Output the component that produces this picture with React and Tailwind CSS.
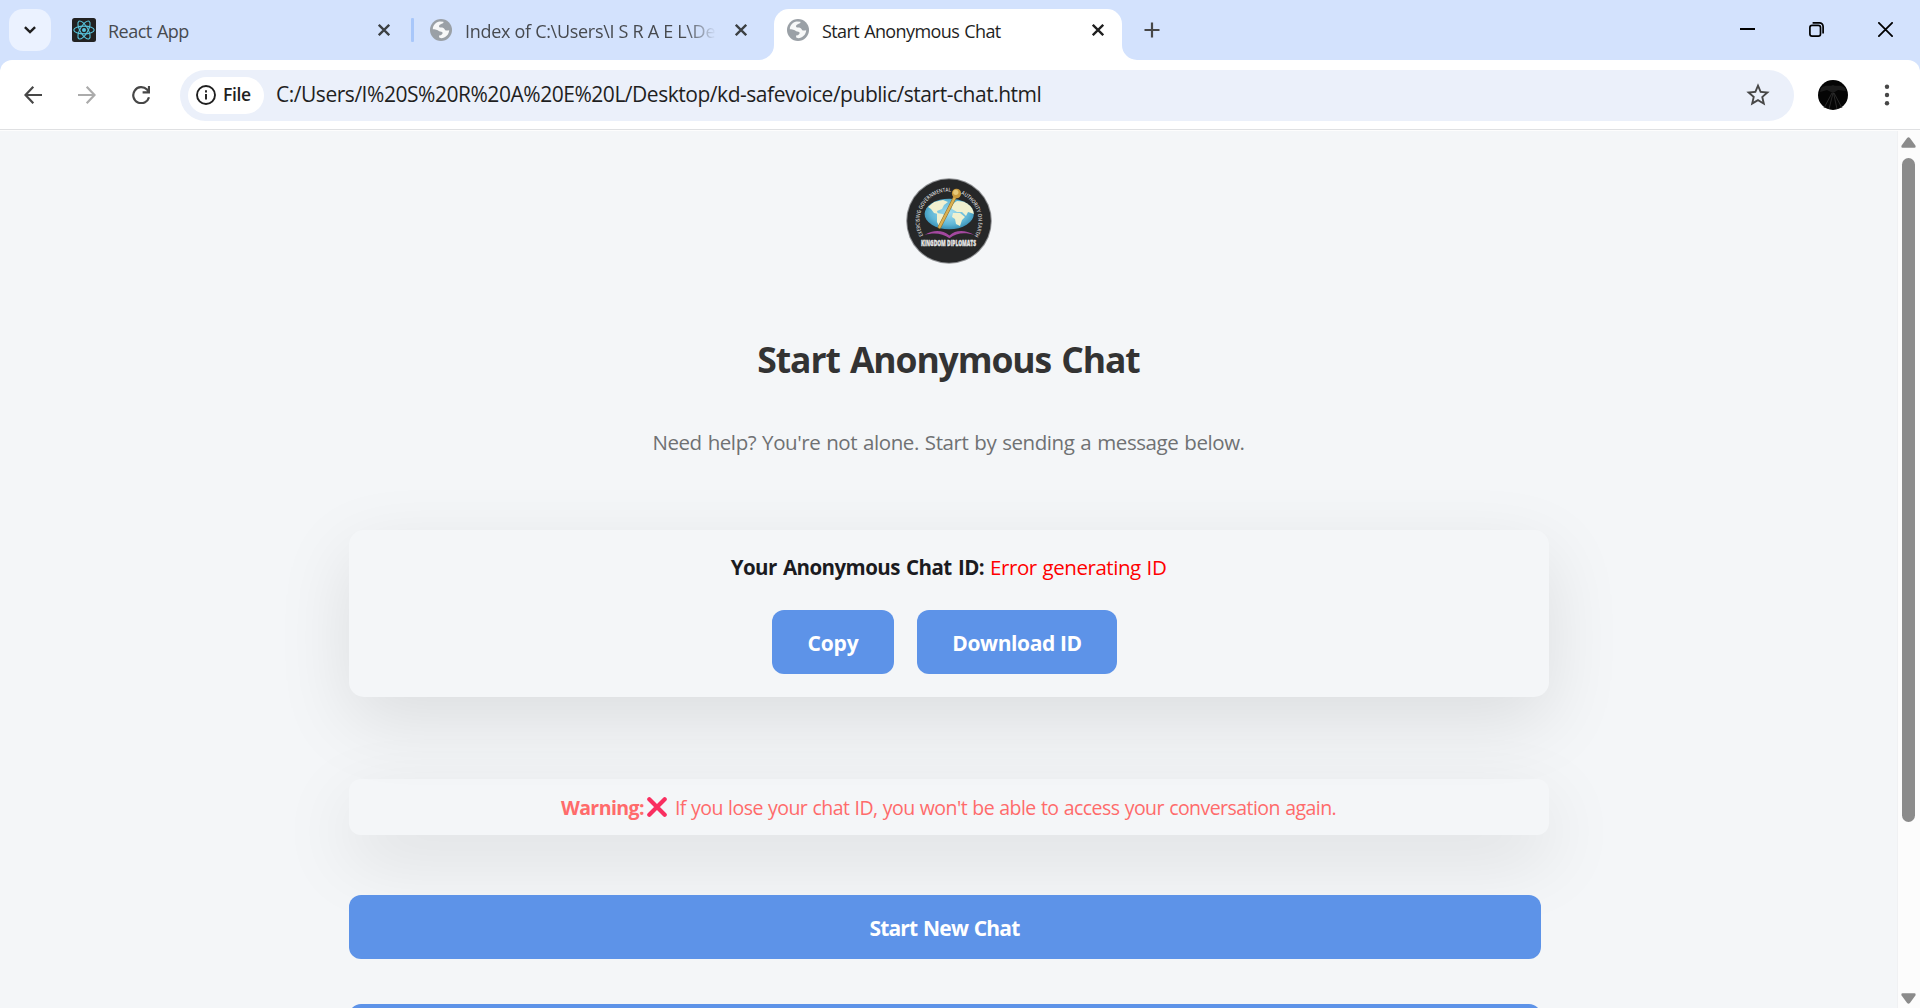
import React from "react";

function Globe() {
  return (
    <svg viewBox="0 0 22 22" className="size-[22px] shrink-0">
      <circle cx="11" cy="11" r="11" fill="#9aa0a6" />
      <path
        fill="#fff"
        fillOpacity="0.92"
        d="M2.8 10.2C3 6 6 3 9.8 2.6L13.4 2.8C14 4.8 11.2 4.6 9.6 6C8.6 7 8.8 8.4 10.4 8.5C12.6 8.4 14 8.8 14.6 10.2C15.2 11.6 16 12 19.2 11.2C19 15.6 15.4 19 11.2 19.2L9.2 18.6L9 16.4C11 16.6 12.8 15.4 12.6 13.8C12.2 12.4 10.4 12.6 9.2 12.2C8 11.4 6.8 10.2 2.8 10.2Z"
      />
    </svg>
  );
}

function Cross({ color = "#3c4043" }) {
  return (
    <svg viewBox="0 0 12 12" className="size-3 shrink-0" stroke={color} strokeWidth="2.3">
      <path d="M0.8 0.8L11.2 11.2M11.2 0.8L0.8 11.2" />
    </svg>
  );
}

function ReactIcon() {
  return (
    <svg viewBox="0 0 24 24" className="size-6 shrink-0">
      <rect width="24" height="24" rx="2.5" fill="#222" />
      <g fill="none" stroke="#58c4dc" strokeWidth="1.1">
        <ellipse cx="12" cy="12" rx="10.2" ry="3.9" />
        <ellipse cx="12" cy="12" rx="10.2" ry="3.9" transform="rotate(60 12 12)" />
        <ellipse cx="12" cy="12" rx="10.2" ry="3.9" transform="rotate(120 12 12)" />
      </g>
      <circle cx="12" cy="12" r="2" fill="#58c4dc" />
    </svg>
  );
}

function Logo() {
  return (
    <svg viewBox="0 0 86 86" className="size-[86px] shrink-0">
      <defs>
        <path id="arcLeft" d="M17.3 57.4A29.5 29.5 0 0 1 46.5 13.7" />
        <path id="arcRight" d="M55 16.1A29.5 29.5 0 0 1 67.9 58.8" />
        <radialGradient id="sea" cx="50%" cy="45%" r="60%">
          <stop offset="0" stopColor="#a5dff0" />
          <stop offset="0.65" stopColor="#5fb6d6" />
          <stop offset="1" stopColor="#2e86ad" />
        </radialGradient>
        <clipPath id="globeClip">
          <ellipse cx="43.2" cy="36" rx="24.6" ry="15.3" />
        </clipPath>
      </defs>
      <circle cx="43" cy="43" r="42.8" fill="#8d8f92" />
      <circle cx="43" cy="43" r="41.8" fill="#262728" />
      <g fill="#d8d8d8" fontFamily="Open Sans, sans-serif" fontSize="5.4" fontWeight="600">
        <text textLength="63" lengthAdjust="spacingAndGlyphs">
          <textPath href="#arcLeft">EXERCISING GOVERNMENTAL</textPath>
        </text>
        <text textLength="49.500" lengthAdjust="spacingAndGlyphs">
          <textPath href="#arcRight">AUTHORITY ON EARTH</textPath>
        </text>
      </g>
      <ellipse cx="43.2" cy="36" rx="24.6" ry="15.3" fill="url(#sea)" />
      <g clipPath="url(#globeClip)" fill="#f0f0cf">
        <path d="M22 29l6-5 9-2 5 2-4 3-2 4-5 2 1 3-4-1-3-4z" />
        <path d="M31 35l6 1 3 4-3 5-3 5-3-6z" />
        <path d="M45 27l6-4 12 1 7 7-2 5-6-2-2 4-4-4-5 0-5-3z" />
        <path d="M47 35l7 0 5 4-3 3-2 6-4-2-1-5-3-2z" />
      </g>
      <path d="M18.5 57c9-5.5 18-5 25 .5c6-5.5 15-6 25-.5c-9-3-18-2.5-25 3.2c-7-5-16-6-25-3.2z" fill="#a3489f" />
      <path d="M33.500 49L49 19" stroke="#94702a" strokeWidth="3.6" strokeLinecap="round" />
      <path d="M33.500 49L49 19" stroke="#dbb152" strokeWidth="2.4" strokeLinecap="round" />
      <ellipse cx="50.500" cy="15.500" rx="4.6" ry="4.800" fill="#c99a3d" />
      <ellipse cx="49.800" cy="14.3" rx="2.6" ry="2.6" fill="#e6c878" />
      <text x="42.500" y="68" textAnchor="middle" textLength="55" lengthAdjust="spacingAndGlyphs" fill="#e4e4e4" stroke="#e4e4e4" strokeWidth="0.3" fontFamily="Open Sans, sans-serif" fontSize="8" fontWeight="800">
        KINGDOM DIPLOMATS
      </text>
    </svg>
  );
}

function TabStrip() {
  return (
    <div className="flex h-[60px] shrink-0 bg-[#d3e2fd]">
      <div className="ml-[9px] mt-[9px] flex size-[42px] shrink-0 items-center justify-center rounded-[14px] bg-[#ebf2ff]">
        <svg viewBox="0 0 12 8" className="h-2 w-3" fill="none" stroke="#1f1f1f" strokeWidth="2.4">
          <path d="M0.9 1.1L6 6.1L11.1 1.1" />
        </svg>
      </div>
      <div className="ml-[21px] flex h-[60px] w-[318px] shrink-0 items-center">
        <ReactIcon />
        <span className="ml-3 grow pt-0.5 text-[18px] tracking-[-0.5px] text-[#474a4f] [word-spacing:1px]">React App</span>
        <Cross />
      </div>
      <div className="ml-[21px] mt-[18px] h-6 w-[3px] shrink-0 rounded-[1px] bg-[#a8c7fa]" />
      <div className="ml-4 flex h-[60px] w-[317px] shrink-0 items-center">
        <Globe />
        <span className="ml-[13px] w-[251px] overflow-hidden whitespace-nowrap pt-0.5 text-[18px] tracking-[-0.3px] text-[#474a4f] [mask-image:linear-gradient(to_right,black_220px,transparent_251px)]">
          Index of C:\Users\I S R A E L\De
        </span>
        <span className="ml-auto">
          <Cross />
        </span>
      </div>
      <div className="ml-3 flex w-[378px] shrink-0">
        <svg viewBox="0 0 15 60" className="h-[60px] w-[15px] shrink-0">
          <path d="M15 45A15 15 0 0 1 0 60H15Z" fill="#fff" />
        </svg>
        <div className="mt-[9px] flex h-[51px] w-[348px] items-center rounded-t-[15px] bg-white pb-[9px] pl-[13px] pr-[18px]">
          <Globe />
          <span className="ml-[13px] grow pt-0.5 text-[18px] tracking-[-0.6px] text-[#1f1f1f] [word-spacing:1px]">Start Anonymous Chat</span>
          <Cross color="#1f1f1f" />
        </div>
        <svg viewBox="0 0 15 60" className="h-[60px] w-[15px] shrink-0">
          <path d="M0 45A15 15 0 0 0 15 60H0Z" fill="#fff" />
        </svg>
      </div>
      <svg viewBox="0 0 16 16" className="ml-[7px] mt-[22px] size-4" stroke="#474747" strokeWidth="2.2">
        <path d="M0.5 8H15.5M8 0.5V15.5" />
      </svg>
      <div className="ml-auto mr-[27px] mt-[22px] flex h-4 gap-[54px]">
        <svg viewBox="0 0 15 15" className="size-[15px]">
          <rect y="6" width="15" height="2" />
        </svg>
        <svg viewBox="0 0 15 15" className="size-[15px]" fill="none" stroke="#000" strokeWidth="1.7">
          <rect x="0.9" y="3.4" width="10.6" height="10.7" rx="2.2" />
          <path d="M3.6 0.9H10.5A3.6 3.6 0 0 1 14.1 4.5V11.4" />
        </svg>
        <svg viewBox="0 0 15 15" className="size-[15px]" stroke="#000" strokeWidth="1.8">
          <path d="M0.3 0.3L14.7 14.7M14.7 0.3L0.3 14.7" />
        </svg>
      </div>
    </div>
  );
}

function Toolbar() {
  return (
    <div className="shrink-0 bg-[#d3e2fd]">
      <div className="flex h-[71px] items-center rounded-t-[12px] border-b border-[#fdfdfd] bg-white shadow-[inset_0_-1px_0_#dfe0e2]">
        <svg viewBox="0 0 18 18" className="ml-6 size-[18px] shrink-0" fill="none" stroke="#474747" strokeWidth="2.2">
          <path d="M9.3 0.8L1.5 9L9.3 17.2M1.5 9H18" />
        </svg>
        <svg viewBox="0 0 18 18" className="ml-9 size-[18px] shrink-0" fill="none" stroke="#ababab" strokeWidth="2.2">
          <path d="M8.7 0.8L16.5 9L8.7 17.2M16.5 9H0" />
        </svg>
        <svg viewBox="0 0 18 18" className="ml-9 size-[18px] shrink-0" fill="none" stroke="#474747" strokeWidth="2.2">
          <path d="M17 11.2A8 8 0 1 1 15 3.6L16.8 5.6M17 0V6.3H10.6" />
        </svg>
        <div className="ml-[30px] flex h-[51px] w-[1614px] shrink-0 items-center rounded-full bg-[#ebf0fa] pl-2">
          <div className="flex h-[37px] w-[76px] shrink-0 items-center rounded-full bg-white pl-2">
            <svg viewBox="0 0 20 20" className="size-5 shrink-0" fill="none" stroke="#1f1f1f" strokeWidth="1.9">
              <circle cx="10" cy="10" r="9" />
              <path d="M10 9V14.6M10 5.2V7.4" />
            </svg>
            <span className="ml-[7px] pb-0.5 text-[17.5px] font-semibold leading-6 tracking-[-0.4px] text-[#1f1f1f]">File</span>
          </div>
          <span className="ml-3 grow whitespace-nowrap pb-0.5 text-[21px] leading-7 tracking-[-0.47px] text-[#1f1f1f]">
            C:/Users/I%20S%20R%20A%20E%20L/Desktop/kd-safevoice/public/start-chat.html
          </span>
          <svg viewBox="0 0 24 24" className="mr-[22px] size-[28px] shrink-0" fill="#474747">
            <path d="M22 9.24l-7.19-.62L12 2 9.19 8.63 2 9.24l5.46 4.73L5.82 21 12 17.27 18.18 21l-1.63-7.03L22 9.24zM12 15.4l-3.76 2.27 1-4.28-3.32-2.88 4.38-.38L12 6.1l1.71 4.04 4.38.38-3.32 2.88 1 4.28L12 15.4z" />
          </svg>
        </div>
        <svg viewBox="0 0 30 30" className="ml-6 size-[30px] shrink-0">
          <circle cx="15" cy="15" r="15" fill="#050505" />
          <path d="M3 8C8 4 11 7 15 5C19 7 22 4 27 8L28 11L20 10L15 13L9 10L2 12Z" fill="#1c1c1c" />
          <path d="M14 13L6 28M16 13L24 28M15 13L11 29M15.5 13L19 29" stroke="#333" strokeWidth="0.8" fill="none" />
        </svg>
        <svg viewBox="0 0 6 22" className="ml-9 h-[22px] w-1.5 shrink-0" fill="#474747">
          <circle cx="3" cy="2.7" r="2.2" />
          <circle cx="3" cy="11" r="2.2" />
          <circle cx="3" cy="19.3" r="2.2" />
        </svg>
      </div>
    </div>
  );
}

function Scrollbar() {
  return (
    <div className="flex w-[23px] shrink-0 flex-col items-center border-l border-[#f0f1f3] bg-[#fcfcfc] pr-0.5">
      <svg viewBox="0 0 15 11" className="mt-1.5 h-[11px] w-[15px]" fill="#8b8b8b">
        <path d="M6.1 1Q7.5-.6 8.9 1L14.4 8.6Q15.2 10.6 13.4 10.8H1.6Q-.2 10.6.6 8.6Z" />
      </svg>
      <div className="mt-[10px] h-[664px] w-[13px] rounded-full bg-[#8b8b8b]" />
      <svg viewBox="0 0 15 11" className="mb-1 mt-auto h-[11px] w-[15px] rotate-180" fill="#8b8b8b">
        <path d="M6.1 1Q7.5-.6 8.9 1L14.4 8.6Q15.2 10.6 13.4 10.8H1.6Q-.2 10.6.6 8.6Z" />
      </svg>
    </div>
  );
}

export default function App() {
  return (
    <div className="flex h-[1008px] w-[1920px] flex-col overflow-hidden bg-[#f4f6f8] font-['Open_Sans',sans-serif]">
      <TabStrip />
      <Toolbar />
      <div className="flex min-h-0 grow">
        <main className="flex min-w-0 grow flex-col items-center overflow-hidden pt-[47px]">
          <Logo />
          <h1 className="mt-[70px] shrink-0 text-[35.5px] font-bold leading-[50px] tracking-[-1.1px] text-[#333] [word-spacing:2px]">Start Anonymous Chat</h1>
          <p className="mt-[44px] shrink-0 text-[20.5px] leading-[28px] tracking-[-0.42px] text-[#6f7173] [word-spacing:1px]">
            Need help? You're not alone. Start by sending a message below.
          </p>
          <section className="mt-[74px] flex h-[167px] w-[1200px] shrink-0 flex-col items-center rounded-[15px] shadow-[0_24px_75px_rgba(0,0,0,0.1)]">
            <p className="mt-[23px] text-[20.5px] leading-[28px] text-[#1b1b1f]">
              <strong className="tracking-[-0.56px] [word-spacing:1.5px]">Your Anonymous Chat ID:</strong>
              <span className="ml-1.5 tracking-[-0.45px] text-[#ff0000] [word-spacing:1px]">Error generating ID</span>
            </p>
            <div className="mr-2 mt-[29px] flex gap-[23px] text-[21px] font-bold text-white">
              <button className="h-16 w-[122px] rounded-[12px] bg-[#5d93e8] pt-1 tracking-[-0.2px]">Copy</button>
              <button className="h-16 w-[200px] rounded-[12px] bg-[#5d93e8] pt-1 tracking-[-0.4px]">Download ID</button>
            </div>
          </section>
          <section className="mt-[82px] flex h-14 w-[1200px] shrink-0 items-center justify-center rounded-[12px] text-[19.5px] text-[#ff6b6b] shadow-[0_24px_75px_rgba(0,0,0,0.1)]">
            <strong className="pt-0.5 tracking-[-0.57px]">Warning:</strong>
            <svg viewBox="0 0 20 20" className="ml-[3px] size-5 shrink-0" stroke="#f92f60" strokeWidth="4.2" strokeLinecap="round">
              <path d="M2.3 2.3L17.7 17.7M17.7 2.3L2.3 17.7" />
            </svg>
            <span className="ml-2 whitespace-nowrap pt-0.5 tracking-[-0.55px] [word-spacing:0.7px]">
              If you lose your chat ID, you won't be able to access your conversation again.
            </span>
          </section>
          <div className="mt-[60px] flex w-[1200px] shrink-0 flex-col gap-[45px] text-[21px] font-bold text-white">
            <button className="h-16 w-[1192px] rounded-[12px] bg-[#5d93e8] pt-1 tracking-[-0.8px] [word-spacing:1px]">Start New Chat</button>
            <button className="h-16 w-[1192px] rounded-[12px] bg-[#5d93e8]" />
          </div>
        </main>
        <Scrollbar />
      </div>
    </div>
  );
}
